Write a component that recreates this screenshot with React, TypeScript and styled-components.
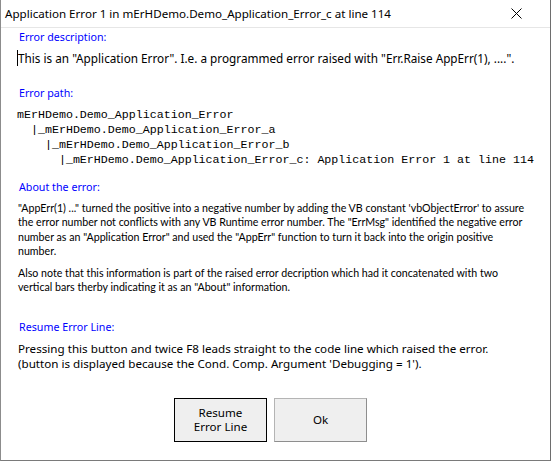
import React from "react";
import styled, { createGlobalStyle } from "styled-components";

const Global = createGlobalStyle`
  html, body { margin: 0; padding: 0; background: #ffffff; }
  #root { width: 552px; height: 461px; }
`;

const Window = styled.div`
  box-sizing: border-box;
  width: 551px;
  height: 461px;
  background: #ffffff;
  border-left: 1px solid #8c8c8c;
  border-right: 1px solid #6e6e6e;
  border-bottom: 1px solid #7a7a7a;
  display: flex;
  flex-direction: column;
`;

const TitleBar = styled.div`
  box-sizing: border-box;
  height: 28px;
  flex: none;
  border-bottom: 1px solid #e6e6e6;
  display: flex;
  align-items: center;
  padding-left: 4px;
  padding-right: 28px;
  justify-content: space-between;
`;

const Title = styled.div`
  font-family: "Noto Sans", sans-serif;
  font-size: 11.6px;
  color: #000000;
  white-space: nowrap;
`;

const CloseIcon = styled.svg`
  width: 11px;
  height: 11px;
  display: block;
`;

const Content = styled.div`
  display: flex;
  flex-direction: column;
  padding: 2px 0 0 17px;
`;

const Label = styled.div<{ $gap: number }>`
  margin-top: ${(p) => p.$gap}px;
  padding-left: 1px;
  font-family: "Noto Sans", sans-serif;
  font-size: 10.7px;
  line-height: 14px;
  color: #0000ff;
  white-space: nowrap;
`;

const Description = styled.div`
  position: relative;
  margin-top: 6px;
  font-family: "Noto Sans", sans-serif;
  font-size: 11.75px;
  line-height: 16px;
  color: #000000;
  white-space: nowrap;
`;

const Caret = styled.span`
  position: absolute;
  left: -1px;
  top: 0;
  width: 1px;
  height: 16px;
  background: #000000;
`;

const PathBlock = styled.pre`
  margin: 6.5px 0 0 -1px;
  font-family: "Liberation Mono", "Courier New", monospace;
  font-size: 11.65px;
  line-height: 15px;
  color: #000000;
`;

const About = styled.div`
  margin-top: 6.8px;
  font-family: "Lato", sans-serif;
  font-size: 10.65px;
  line-height: 14.4px;
  color: #000000;
  white-space: nowrap;
`;

const AboutPara = styled.p<{ $gap: number }>`
  margin: ${(p) => p.$gap}px 0 0 0;
`;

const Pressing = styled.div`
  margin-top: 6.5px;
  font-family: "Noto Sans", sans-serif;
  font-size: 11.65px;
  line-height: 15px;
  color: #000000;
  white-space: nowrap;
`;

const ButtonRow = styled.div`
  display: flex;
  gap: 7px;
  margin-top: 27.5px;
  padding-left: 156px;
`;

const Button = styled.button<{ $default?: boolean }>`
  box-sizing: border-box;
  width: 93px;
  height: 44px;
  margin: 0;
  padding: 0;
  background: #efefef;
  border: 1px solid ${(p) => (p.$default ? "#000000" : "#b4b4b4")};
  ${(p) => (p.$default ? "" : "border-right-color: #8e8e8e; border-bottom-color: #8e8e8e;")}
  font-family: "Noto Sans", sans-serif;
  font-size: 11.6px;
  line-height: 14px;
  color: #000000;
  text-align: center;
`;

export default function App() {
  return (
    <>
      <Global />
      <Window>
        <TitleBar>
          <Title>Application Error 1 in mErHDemo.Demo_Application_Error_c at line 114</Title>
          <CloseIcon viewBox="0 0 11 11">
            <path d="M0.5 0.5 L10.5 10.5 M10.5 0.5 L0.5 10.5" stroke="#000" strokeWidth="1" fill="none" />
          </CloseIcon>
        </TitleBar>
        <Content>
          <Label $gap={0}>Error description:</Label>
          <Description>
            <Caret />
            This is an "Application Error". I.e. a programmed error raised with "Err.Raise AppErr(1), ....".
          </Description>
          <Label $gap={20}>Error path:</Label>
          <PathBlock>{`mErHDemo.Demo_Application_Error
  |_mErHDemo.Demo_Application_Error_a
    |_mErHDemo.Demo_Application_Error_b
      |_mErHDemo.Demo_Application_Error_c: Application Error 1 at line 114`}</PathBlock>
          <Label $gap={13.5}>About the error:</Label>
          <About>
            <AboutPara $gap={0}>
              "AppErr(1) ..." turned the positive into a negative number by adding the VB constant 'vbObjectError' to assure
              <br />
              the error number not conflicts with any VB Runtime error number. The "ErrMsg" identified the negative error
              <br />
              number as an "Application Error" and used the "AppErr" function to turn it back into the origin positive
              <br />
              number.
            </AboutPara>
            <AboutPara $gap={7.6}>
              Also note that this information is part of the raised error decription which had it concatenated with two
              <br />
              vertical bars therby indicating it as an "About" information.
            </AboutPara>
          </About>
          <Label $gap={25.5}>Resume Error Line:</Label>
          <Pressing>
            Pressing this button and twice F8 leads straight to the code line which raised the error.
            <br />
            (button is displayed because the Cond. Comp. Argument 'Debugging = 1').
          </Pressing>
          <ButtonRow>
            <Button $default>
              Resume
              <br />
              Error Line
            </Button>
            <Button>Ok</Button>
          </ButtonRow>
        </Content>
      </Window>
    </>
  );
}
